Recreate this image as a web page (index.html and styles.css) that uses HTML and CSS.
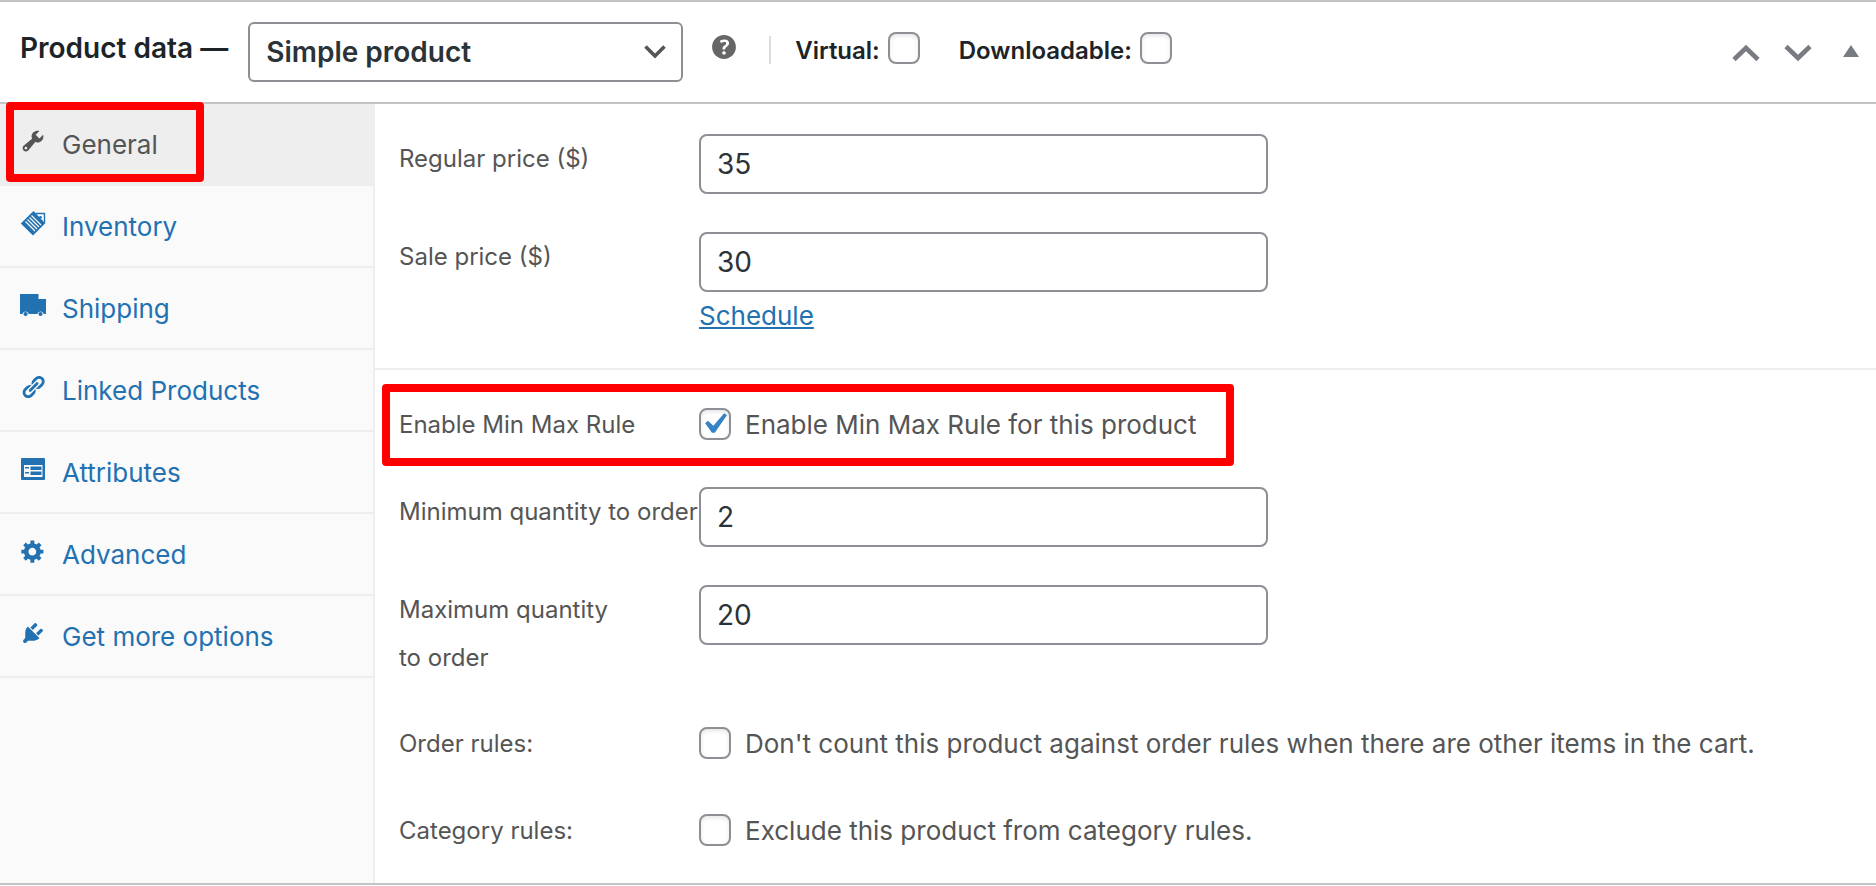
FILE: index.html
```
<!DOCTYPE html>
<html lang="en">
<head>
  <meta charset="UTF-8">
  <title>Product data</title>
  <link rel="stylesheet" href="styles.css">
</head>
<body>

  <div class="postbox">
    <div class="postbox-header">
      <h2><label for="product-type">Product data —</label></h2>
      <select id="product-type" name="product-type">
        <option selected>Simple product</option>
        <option>Grouped product</option>
        <option>External/Affiliate product</option>
        <option>Variable product</option>
      </select>
      <svg class="help-tip" viewBox="0 0 20 20"><path d="M17 10c0-3.87-3.14-7-7-7-3.87 0-7 3.13-7 7s3.13 7 7 7c3.86 0 7-3.13 7-7zm-6.3 1.48H9.14v-.43c0-.38.08-.7.24-.98s.46-.57.88-.89c.41-.29.68-.53.81-.71.14-.18.2-.39.2-.62 0-.25-.09-.44-.28-.58-.19-.13-.45-.19-.79-.19-.58 0-1.25.19-2 .57l-.64-1.28c.87-.49 1.8-.74 2.77-.74.81 0 1.45.2 1.92.58.48.39.71.91.71 1.55 0 .43-.09.8-.29 1.11-.19.32-.57.67-1.11 1.06-.38.28-.61.49-.71.63-.1.15-.15.34-.15.57v.35zm-1.47 2.74c-.18-.17-.27-.42-.27-.73 0-.33.08-.58.26-.75s.43-.25.77-.25c.32 0 .57.09.75.26s.27.42.27.74c0 .3-.09.55-.27.72-.18.18-.43.27-.75.27-.33 0-.58-.09-.76-.26z"/></svg>
      <div class="type-options">
        <label for="virtual">Virtual: <input type="checkbox" id="virtual"></label>
        <label for="downloadable">Downloadable: <input type="checkbox" id="downloadable"></label>
      </div>
      <div class="handle-actions">
        <button type="button" aria-label="Move up"><svg width="28" height="18" viewBox="0 0 28 18"><path class="stroke" d="M2 15.500L14 4l12 11.500"/></svg></button>
        <button type="button" aria-label="Move down"><svg width="28" height="18" viewBox="0 0 28 18"><path class="stroke" d="M2 2.500L14 14 26 2.500"/></svg></button>
        <button type="button" aria-label="Toggle panel"><svg width="16" height="18" viewBox="0 0 16 18"><path d="M8 1l8 12H0z"/></svg></button>
      </div>
    </div>

    <div class="panel-wrap">
      <ul class="product-tabs">
        <li class="active">
          <a href="#general"><svg viewBox="0 0 20 20"><path d="M16.680 9.770c-1.340 1.340-3.300 1.670-4.950.99l-5.410 6.520c-.99.99-2.590.99-3.580 0s-.99-2.590 0-3.570l6.520-5.420c-.68-1.650-.35-3.610.99-4.950 1.280-1.280 3.120-1.620 4.720-1.060l-2.890 2.890 2.820 2.820 2.860-2.870c.53 1.580.18 3.390-1.080 4.650zM3.810 16.210c.4.39 1.040.39 1.430 0 .4-.4.4-1.040 0-1.430-.39-.4-1.030-.4-1.430 0-.39.39-.39 1.030 0 1.430z"/></svg>General</a>
          <span class="highlight"></span>
        </li>
        <li>
          <a href="#inventory"><svg viewBox="0 0 26 26"><path d="M13.500 1L25.500 13 13 25.500.8 13.500z"/><path d="M16 3.500h8.500v9" fill="#fafafa" stroke="#2271b1" stroke-width="1.400"/><circle cx="20.500" cy="7.200" r="1.300"/><path d="M11.500 5.500l9.500 9.500M9.500 7.500l9.500 9.500M7.500 9.500l9.500 9.500M5.500 11.500l9.500 9.500" stroke="#fafafa" stroke-width="1.200"/></svg>Inventory</a>
        </li>
        <li>
          <a href="#shipping"><svg viewBox="0 0 26 26"><path d="M0 2h18.500v5H26v15h-2.200a3.400 3.400 0 0 0-6.600 0H8.900a3.400 3.400 0 0 0-6.600 0H0z"/><circle cx="5.600" cy="22" r="2.100"/><circle cx="20.500" cy="22" r="2.100"/></svg>Shipping</a>
        </li>
        <li>
          <a href="#linked"><svg viewBox="0 0 20 20"><path d="M17.740 2.760c1.680 1.690 1.680 4.410 0 6.100l-1.530 1.520c-1.120 1.120-2.700 1.470-4.140 1.090l2.620-2.610.76-.77.76-.76c.84-.84.84-2.200 0-3.040-.84-.85-2.200-.85-3.040 0l-.77.76-3.380 3.380c-.37-1.440-.02-3.020 1.100-4.140l1.520-1.530c1.690-1.680 4.420-1.680 6.100 0zM8.590 13.430l5.340-5.340c.42-.42.42-1.100 0-1.520-.44-.43-1.130-.39-1.530 0l-5.330 5.340c-.42.42-.42 1.100 0 1.520.44.43 1.130.39 1.520 0zm-.76 2.290l4.140-4.150c.38 1.440.03 3.020-1.090 4.140l-1.520 1.530c-1.690 1.680-4.410 1.680-6.100 0-1.680-1.680-1.680-4.420 0-6.100l1.530-1.520c1.120-1.120 2.700-1.470 4.140-1.100l-4.140 4.150c-.85.84-.85 2.200 0 3.050.84.84 2.200.84 3.040 0z"/></svg>Linked Products</a>
        </li>
        <li>
          <a href="#attributes"><svg viewBox="0 0 26 26"><path fill-rule="evenodd" d="M2 2h22q1 0 1 1v20q0 1-1 1H2q-1 0-1-1V3q0-1 1-1zm2 7v12h18.500V9z"/><path d="M5 11h4v1.500H5zM5 16h4v1.500H5zM10.500 10.500h11v3.500h-11zM10.500 15.500h11V19h-11z"/></svg>Attributes</a>
        </li>
        <li>
          <a href="#advanced"><svg viewBox="0 0 20 20"><path d="M18 12h-2.180c-.17.7-.44 1.350-.81 1.930l1.540 1.540-2.100 2.100-1.540-1.540c-.58.36-1.230.63-1.910.79V19H8v-2.180c-.68-.16-1.330-.43-1.910-.79l-1.540 1.540-2.120-2.120 1.540-1.540c-.36-.58-.63-1.230-.79-1.910H1V9.030h2.170c.16-.7.44-1.350.8-1.940L2.430 5.550l2.100-2.100 1.540 1.540c.58-.37 1.240-.64 1.930-.81V2h3v2.180c.68.16 1.330.43 1.910.79l1.540-1.540 2.120 2.120-1.540 1.540c.36.59.64 1.240.8 1.940H18V12zm-8.500 1.500c1.660 0 3-1.340 3-3s-1.340-3-3-3-3 1.340-3 3 1.340 3 3 3z"/></svg>Advanced</a>
        </li>
        <li>
          <a href="#more"><svg viewBox="0 0 20 20"><path d="M13.110 4.360L9.870 7.600 8 5.730l3.240-3.240c.35-.34 1.050-.2 1.560.32.52.51.66 1.210.31 1.550zm-8 1.770l.91-1.120 9.010 9.010-1.190.84c-.71.71-2.630 1.160-3.820 1.160H6.140L4.900 17.260c-.59.59-1.540.59-2.120 0-.59-.58-.59-1.530 0-2.120l1.240-1.240v-3.880c0-1.130.4-3.190 1.090-3.890zm7.260 3.970l3.240-3.240c.34-.35 1.040-.21 1.550.31.52.51.66 1.210.31 1.550l-3.240 3.250z"/></svg>Get more options</a>
        </li>
      </ul>

      <div class="options-panel" id="general">
        <div class="options-group">
          <div class="form-field">
            <label for="regular-price">Regular price ($)</label>
            <div class="control"><input type="text" id="regular-price" value="35"></div>
          </div>
          <div class="form-field">
            <label for="sale-price">Sale price ($)</label>
            <div class="control">
              <input type="text" id="sale-price" value="30">
              <a class="description" href="#schedule">Schedule</a>
            </div>
          </div>
        </div>

        <div class="options-group">
          <div class="form-field">
            <label for="enable-rule">Enable Min Max Rule</label>
            <div class="control check">
              <input type="checkbox" id="enable-rule" checked>
              <label for="enable-rule">Enable Min Max Rule for this product</label>
            </div>
            <span class="highlight"></span>
          </div>
          <div class="form-field">
            <label for="min-qty" class="nowrap">Minimum quantity to order</label>
            <div class="control"><input type="text" id="min-qty" value="2"></div>
          </div>
          <div class="form-field">
            <label for="max-qty">Maximum quantity<br>to order</label>
            <div class="control"><input type="text" id="max-qty" value="20"></div>
          </div>
          <div class="form-field">
            <label for="order-rules">Order rules:</label>
            <div class="control check">
              <input type="checkbox" id="order-rules">
              <label for="order-rules">Don't count this product against order rules when there are other items in the cart.</label>
            </div>
          </div>
          <div class="form-field">
            <label for="category-rules">Category rules:</label>
            <div class="control check">
              <input type="checkbox" id="category-rules">
              <label for="category-rules">Exclude this product from category rules.</label>
            </div>
          </div>
        </div>
      </div>
    </div>
  </div>

</body>
</html>
```

FILE: styles.css
```
* {
  box-sizing: border-box;
}

body {
  margin: 0;
  font-family: Inter, "Liberation Sans", sans-serif;
  font-size: 26px;
  color: #555;
  background: #fff;
}

.postbox {
  border-top: 2px solid #c3c4c7;
  border-bottom: 2px solid #c3c4c7;
}

.postbox-header {
  display: flex;
  align-items: center;
  height: 102px;
  padding: 0 17px 0 20px;
  border-bottom: 2px solid #c3c4c7;
  color: #1d2327;
}

.postbox-header h2 {
  margin: 0 20px 8px 0;
  font-size: 28px;
  font-weight: 600;
  white-space: nowrap;
}

select {
  appearance: none;
  width: 435px;
  height: 60px;
  padding: 0 48px 0 16px;
  border: 2px solid #8c8f94;
  border-radius: 6px;
  background: #fff url("data:image/svg+xml,%3Csvg xmlns='http://www.w3.org/2000/svg' width='22' height='14' viewBox='0 0 22 14'%3E%3Cpath d='M1.500 1.500L11 11l9.500-9.500' fill='none' stroke='%23555' stroke-width='3.600'/%3E%3C/svg%3E") no-repeat right 15px center;
  font-family: inherit;
  font-size: 28px;
  font-weight: 600;
  color: #2c3338;
}

.help-tip {
  width: 34px;
  height: 34px;
  margin: 0 28px 10px 24px;
  fill: #666;
}

.type-options {
  display: flex;
  align-items: center;
  gap: 39px;
  height: 28px;
  margin-bottom: 4px;
  padding-left: 24px;
  border-left: 2px solid #ddd;
  font-size: 24px;
  font-weight: 600;
}

.type-options label {
  display: flex;
  align-items: center;
  gap: 8px;
}

.handle-actions {
  display: flex;
  gap: 24px;
  margin-top: 2px;
  margin-left: auto;
}

.handle-actions button {
  padding: 0;
  border: none;
  background: none;
  cursor: pointer;
}

.handle-actions button:last-child {
  margin-left: 7px;
}

.handle-actions svg {
  display: block;
  fill: #787c82;
}

.handle-actions .stroke {
  fill: none;
  stroke: #787c82;
  stroke-width: 4.600;
}

input[type="checkbox"] {
  appearance: none;
  flex: none;
  width: 32px;
  height: 32px;
  margin: 0;
  border: 2px solid #8c8f94;
  border-radius: 8px;
  background: #fff;
  box-shadow: inset 0 2px 4px rgba(0,0,0,0.1);
}

.type-options input[type="checkbox"] {
  margin-bottom: 4px;
}

input[type="checkbox"]:checked {
  background: #fff url("data:image/svg+xml,%3Csvg xmlns='http://www.w3.org/2000/svg' viewBox='0 0 20 20'%3E%3Cpath d='M14.830 4.890l1.340.94-5.810 8.380H9.020L5.780 9.670l1.340-1.250 2.570 2.400z' fill='%233582c4'/%3E%3C/svg%3E") no-repeat -8px -7px / 42px;
}

.panel-wrap {
  display: flex;
}

.product-tabs {
  flex: none;
  width: 375px;
  margin: 0;
  padding: 0;
  list-style: none;
  background: #fafafa;
  border-right: 2px solid #eee;
}

.product-tabs li {
  position: relative;
}

.product-tabs a {
  display: flex;
  align-items: center;
  gap: 16px;
  height: 82px;
  padding: 1px 0 0 20px;
  border-bottom: 2px solid #eee;
  color: #2271b1;
  text-decoration: none;
}

.product-tabs svg {
  width: 26px;
  height: 26px;
  margin-bottom: 7px;
  fill: currentColor;
}

.product-tabs .active a {
  background: #eee;
  color: #555;
}

/* red callout frames */
.highlight {
  position: absolute;
  border: 8px solid #f00;
  border-radius: 4px;
  pointer-events: none;
}

.product-tabs .highlight {
  top: -2px;
  left: 6px;
  width: 198px;
  height: 80px;
}

.form-field .highlight {
  top: -6px;
  left: 7px;
  width: 852px;
  height: 82px;
}

.options-panel {
  flex: 1;
}

.options-group {
  display: flex;
  flex-direction: column;
  gap: 18px;
  padding: 20px 0 18px;
}

.options-group + .options-group {
  border-top: 2px solid #eee;
}

.form-field {
  position: relative;
  display: grid;
  grid-template-columns: 300px 1fr;
  padding: 10px 40px 10px 24px;
  line-height: 48px;
}

.form-field > label {
  margin: 1px 0 -1px;
  font-size: 24px;
}

.nowrap {
  white-space: nowrap;
}

.control input[type="text"] {
  display: block;
  width: 50%;
  height: 60px;
  padding: 0 16px;
  border: 2px solid #8c8f94;
  border-radius: 8px;
  font-family: inherit;
  font-size: 28px;
  color: #2c3338;
}

.control .description {
  display: block;
  width: max-content;
  color: #2271b1;
}

.control.check {
  display: flex;
  align-items: flex-end;
  gap: 14px;
  height: 49px;
}

.control.check input {
  margin-bottom: 9px;
}
```
